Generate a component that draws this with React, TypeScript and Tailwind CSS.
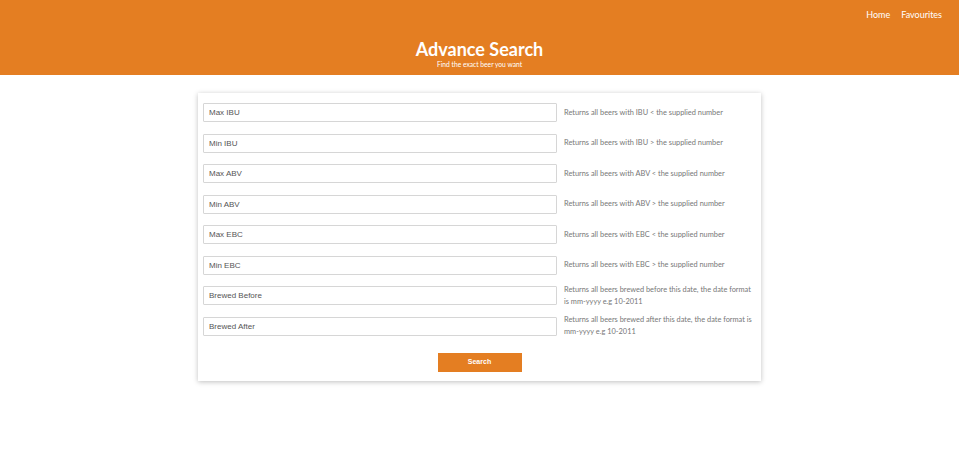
import React from "react"

const fields = [
  { label: "Max IBU", help: "Returns all beers with IBU < the supplied number" },
  { label: "Min IBU", help: "Returns all beers with IBU > the supplied number" },
  { label: "Max ABV", help: "Returns all beers with ABV < the supplied number" },
  { label: "Min ABV", help: "Returns all beers with ABV > the supplied number" },
  { label: "Max EBC", help: "Returns all beers with EBC < the supplied number" },
  { label: "Min EBC", help: "Returns all beers with EBC > the supplied number" },
  { label: "Brewed Before", help: "Returns all beers brewed before this date, the date format is mm-yyyy e.g 10-2011" },
  { label: "Brewed After", help: "Returns all beers brewed after this date, the date format is mm-yyyy e.g 10-2011" },
]

export default function App() {
  return (
    <div className="min-h-screen bg-white font-['Lato',sans-serif]">
      {/* header */}
      <header className="h-[75px] bg-[#e47e22] text-white flex flex-col">
        <nav className="flex justify-end gap-[11px] pr-[17px] pt-[8px] text-[9px]">
          <a href="#">Home</a>
          <a href="#">Favourites</a>
        </nav>
        <div className="flex flex-col items-center mt-[16px]">
          <h1 className="text-[18px] font-bold leading-[22px]">Advance Search</h1>
          <p className="text-[6.7px] leading-[9px]">Find the exact beer you want</p>
        </div>
      </header>

      {/* form card */}
      <div className="flex justify-center pt-[18px]">
        <form className="w-[563px] bg-white shadow-[0_1px_5px_rgba(0,0,0,0.25)] pt-[10px] pb-[9px] px-[5px] flex flex-col">
          <div className="flex flex-col gap-[11.5px]">
            {fields.map((f) => (
              <div key={f.label} className="flex items-center h-[19px] gap-[7px]">
                <input
                  placeholder={f.label}
                  className="w-[354px] h-[19px] shrink-0 border border-[#d6d6d6] rounded-[1px] px-[5px] text-[8px] font-['Liberation_Sans',sans-serif] placeholder:text-[#555] outline-none"
                />
                <p className="text-[7.4px] leading-[12px] text-[#777] pr-[2px]">{f.help}</p>
              </div>
            ))}
          </div>
          <div className="flex justify-center mt-[17px]">
            <button
              type="button"
              className="w-[84px] h-[19px] bg-[#e47e22] text-white text-[7px] font-bold font-['Liberation_Sans',sans-serif]"
            >
              Search
            </button>
          </div>
        </form>
      </div>
    </div>
  )
}
